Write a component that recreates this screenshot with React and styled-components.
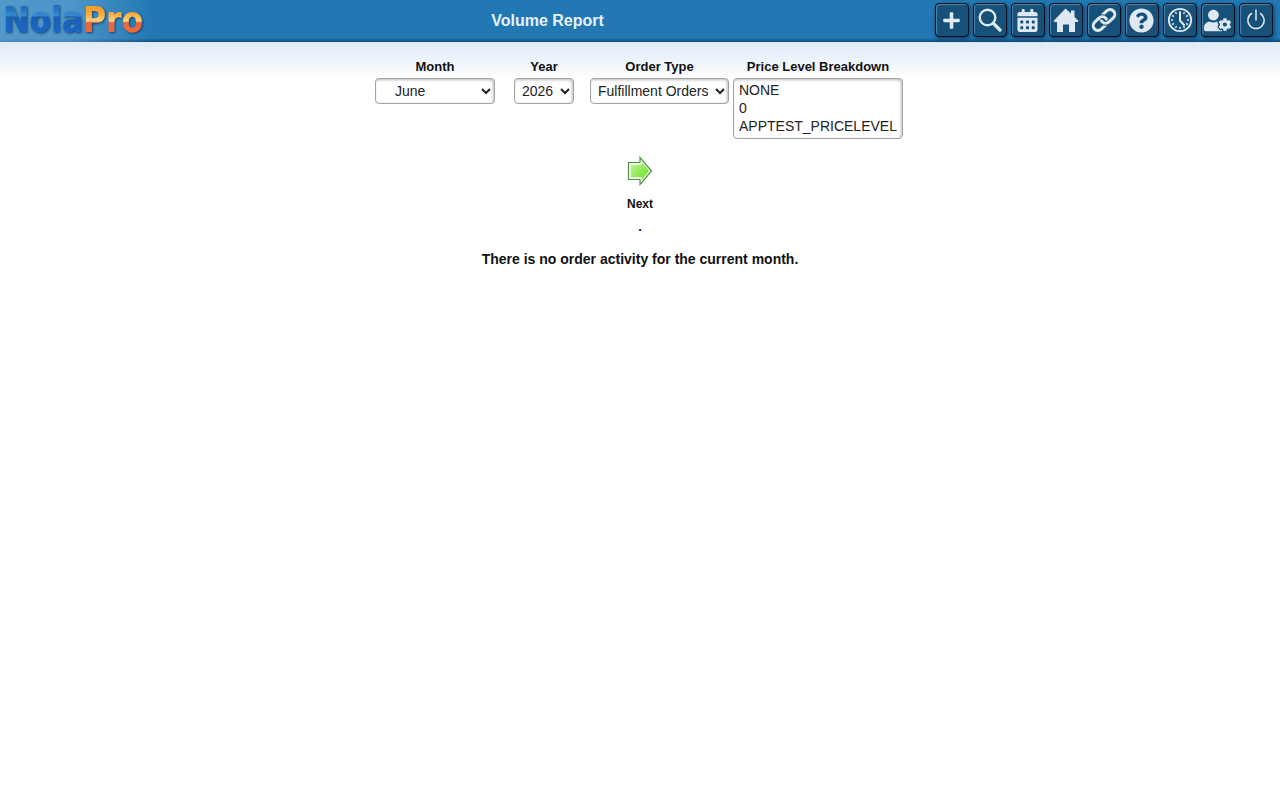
import React from "react";
import styled, { createGlobalStyle } from "styled-components";
import { FaPlus, FaCalendarAlt, FaQuestionCircle, FaUserCog } from "react-icons/fa";

const GlobalStyle = createGlobalStyle`
  * { box-sizing: border-box; }
  body {
    margin: 0;
    background: #fff;
    color: #111;
    font-family: "Liberation Sans", Arial, sans-serif;
    font-size: 14px;
  }
`;

const Header = styled.header`
  display: flex;
  height: 42px;
  padding-right: 7px;
  background: linear-gradient(to bottom, transparent 38px, #0f4a75 42px), #2178b3;
`;

const LogoLink = styled.a`
  flex: 0 0 160px;
  height: 42px;
  background: linear-gradient(to right, #6aa9d7aa, #6aa9d799 70px, transparent 155px);
  svg { display: block; overflow: visible; }
`;

const Title = styled.h1`
  flex: 1;
  margin: 0;
  text-align: center;
  font-size: 16px;
  line-height: 41px;
  color: #e6f1fa;
`;

const Toolbar = styled.nav`
  display: flex;
  gap: 4px;
  padding-top: 3px;
`;

const ToolButton = styled.button`
  display: flex;
  align-items: center;
  justify-content: center;
  width: 34px;
  height: 34px;
  padding: 0 1px 0 0;
  border: 1px solid #020d1c;
  border-radius: 4px;
  background: #175078;
  color: #dfe9f3;
  box-shadow: inset 1px 1px 1px #5585a5, 1px 2px 4px #0d3f66;
`;

const Main = styled.main`
  display: flex;
  flex-direction: column;
  align-items: center;
  padding-top: 17px;
  background: linear-gradient(to bottom, #deebf7, #fff 38px);
`;

const Filters = styled.form`
  display: flex;
  align-items: flex-start;
  justify-content: center;
  padding-right: 2px;
`;

const Field = styled.div`
  display: flex;
  flex-direction: column;
  align-items: center;
  gap: 3px;
  width: ${(p) => p.$width}px;
  margin-right: ${(p) => p.$gap || 0}px;
`;

const Label = styled.label`
  font-size: 13px;
  line-height: 16px;
  font-weight: bold;
  white-space: nowrap;
`;

const Select = styled.select`
  width: 100%;
  height: 26px;
  padding: 0 0 0 ${(p) => p.$indent || 3}px;
  border: 1px solid #a3a3a3;
  border-radius: 4px;
  background: #fff;
  color: #222;
  font-family: inherit;
  font-size: 14px;
  box-shadow: inset -1px 1px 3px #bbb;
`;

const ListBox = styled(Select)`
  height: 61px;
  padding: 3px 3px 2px;
  overflow: hidden;
  option { min-height: 18px; line-height: 18px; padding: 0 2px; }
`;

const NextButton = styled.button`
  display: flex;
  flex-direction: column;
  align-items: center;
  gap: 10px;
  margin-top: 17px;
  padding: 0;
  border: 0;
  background: none;
  color: #111;
  font-family: inherit;
  font-size: 12px;
  line-height: 16px;
  font-weight: bold;
`;

const Dot = styled.div`
  margin-top: 7px;
  font-size: 13px;
  line-height: 16px;
  font-weight: bold;
`;

const Message = styled.p`
  margin: 15px 0 0;
  font-size: 14px;
  line-height: 18px;
  font-weight: bold;
`;

const Logo = () => (
  <svg width="160" height="42" viewBox="0 0 160 42" role="img" aria-label="NolaPro">
    <defs>
      <linearGradient id="blue" gradientUnits="userSpaceOnUse" x1="0" y1="3" x2="0" y2="32">
        <stop offset="0" stopColor="#1a69b8" />
        <stop offset="0.25" stopColor="#2277c6" />
        <stop offset="0.42" stopColor="#3a8ad2" />
        <stop offset="0.5" stopColor="#1960ba" />
        <stop offset="1" stopColor="#1c66c4" />
      </linearGradient>
      <linearGradient id="orange" gradientUnits="userSpaceOnUse" x1="0" y1="3" x2="0" y2="32">
        <stop offset="0" stopColor="#f79a1d" />
        <stop offset="0.35" stopColor="#fba632" />
        <stop offset="0.62" stopColor="#ffd184" />
        <stop offset="0.68" stopColor="#e8643a" />
        <stop offset="1" stopColor="#ee6a3a" />
      </linearGradient>
      <filter id="shade" x="-10%" y="-10%" width="120%" height="130%">
        <feDropShadow dx="1" dy="1" stdDeviation="1" floodColor="#0b2b4d" floodOpacity="0.8" />
      </filter>
    </defs>
    <text x="3" y="32" fontFamily="'DejaVu Sans Condensed', 'DejaVu Sans', sans-serif" fontWeight="bold" fontSize="35" filter="url(#shade)">
      <tspan fill="url(#blue)">Nola</tspan>
      <tspan fill="url(#orange)">Pro</tspan>
    </text>
  </svg>
);

const SearchIcon = () => (
  <svg width="24" height="24" viewBox="0 0 24 24" fill="none" stroke="currentColor">
    <circle cx="9.5" cy="9.5" r="7.8" strokeWidth="2.4" />
    <path d="M15.5 15.5 22 22" strokeWidth="3.2" strokeLinecap="round" />
  </svg>
);

const HomeIcon = () => (
  <svg width="26" height="26" viewBox="0 0 26 26" fill="currentColor">
    <path d="M12.5 1.5 18 6.6V3.5h3.5v6.4l4 4-1 1.2H22V25h-6v-7.5h-6V25H4V15.1H1.5l-1-1.2z" />
  </svg>
);

const LinkIcon = () => (
  <svg width="26" height="26" viewBox="0 0 26 26" fill="none">
    <g transform="rotate(-43 13 13)" strokeWidth="3">
      <rect x="0" y="8.2" width="15.5" height="9.6" rx="4.8" stroke="currentColor" />
      <path d="M15.3 8.2h5.9a4.8 4.8 0 0 1 0 9.6h-5.9a4.8 4.8 0 0 1-4.8-4.8" stroke="#175078" strokeWidth="5" />
      <rect x="10.5" y="8.2" width="15.5" height="9.6" rx="4.8" stroke="currentColor" />
      <path d="M10.7 8.2a4.8 4.8 0 0 1 4.8 4.8" stroke="#175078" strokeWidth="5" />
      <path d="M9.5 8.2h1.2a4.8 4.8 0 0 1 4.8 4.8v.8" stroke="currentColor" />
    </g>
  </svg>
);

const ClockIcon = () => (
  <svg width="26" height="26" viewBox="0 0 26 26" fill="none" stroke="currentColor">
    <circle cx="13" cy="13" r="11.2" strokeWidth="1.8" />
    <path d="M13 6v7.5l4 4.5" strokeWidth="2" strokeLinecap="round" />
    {[0, 30, 60, 90, 120, 150, 180, 210, 240, 270, 300, 330].map((angle) => (
      <path key={angle} d="M13 4v2" strokeWidth="1.5" transform={`rotate(${angle} 13 13)`} />
    ))}
  </svg>
);

const PowerIcon = () => (
  <svg width="22" height="22" viewBox="0 0 22 22" fill="none" stroke="currentColor" strokeWidth="1.5" strokeLinecap="round">
    <path d="M11 1v10M6.5 4.5a8.2 8.2 0 1 0 9 0" />
  </svg>
);

const ArrowIcon = () => (
  <svg width="26" height="30" viewBox="0 0 26 30">
    <defs>
      <linearGradient id="arrow" x1="0" y1="0" x2="1" y2="1">
        <stop offset="0" stopColor="#c2f79a" />
        <stop offset="0.7" stopColor="#7fe83e" />
        <stop offset="1" stopColor="#98ef66" />
      </linearGradient>
    </defs>
    <path d="M1.5 6.5H13V1.5L24.5 15 13 28.5V23.5H1.5z" fill="#f2fdec" stroke="#4f9145" strokeWidth="1.2" />
    <path d="M4 9H15V6l7 9-7 9V21H4z" fill="url(#arrow)" />
  </svg>
);

const tools = [
  { name: "Add", icon: <FaPlus size={19} /> },
  { name: "Search", icon: <SearchIcon /> },
  { name: "Calendar", icon: <FaCalendarAlt size={23} /> },
  { name: "Home", icon: <HomeIcon /> },
  { name: "Links", icon: <LinkIcon /> },
  { name: "Help", icon: <FaQuestionCircle size={25} /> },
  { name: "Time clock", icon: <ClockIcon /> },
  { name: "User settings", icon: <FaUserCog size={27} /> },
  { name: "Log out", icon: <PowerIcon /> },
];

export default function App() {
  return (
    <>
      <GlobalStyle />
      <Header>
        <LogoLink href="#" aria-label="NolaPro"><Logo /></LogoLink>
        <Title>Volume Report</Title>
        <Toolbar>
          {tools.map(({ name, icon }) => (
            <ToolButton key={name} type="button" aria-label={name}>{icon}</ToolButton>
          ))}
        </Toolbar>
      </Header>
      <Main>
        <Filters>
          <Field $width={120} $gap={19}>
            <Label htmlFor="month">Month</Label>
            <Select id="month" $indent={15}><option>June</option></Select>
          </Field>
          <Field $width={60} $gap={16}>
            <Label htmlFor="year">Year</Label>
            <Select id="year"><option>2026</option></Select>
          </Field>
          <Field $width={139} $gap={4}>
            <Label htmlFor="type">Order Type</Label>
            <Select id="type"><option>Fulfillment Orders</option></Select>
          </Field>
          <Field $width={170}>
            <Label htmlFor="price">Price Level Breakdown</Label>
            <ListBox id="price" multiple size={3}>
              <option>NONE</option>
              <option>0</option>
              <option>APPTEST_PRICELEVEL</option>
            </ListBox>
          </Field>
        </Filters>
        <NextButton type="button">
          <ArrowIcon />
          Next
        </NextButton>
        <Dot>.</Dot>
        <Message>There is no order activity for the current month.</Message>
      </Main>
    </>
  );
}
